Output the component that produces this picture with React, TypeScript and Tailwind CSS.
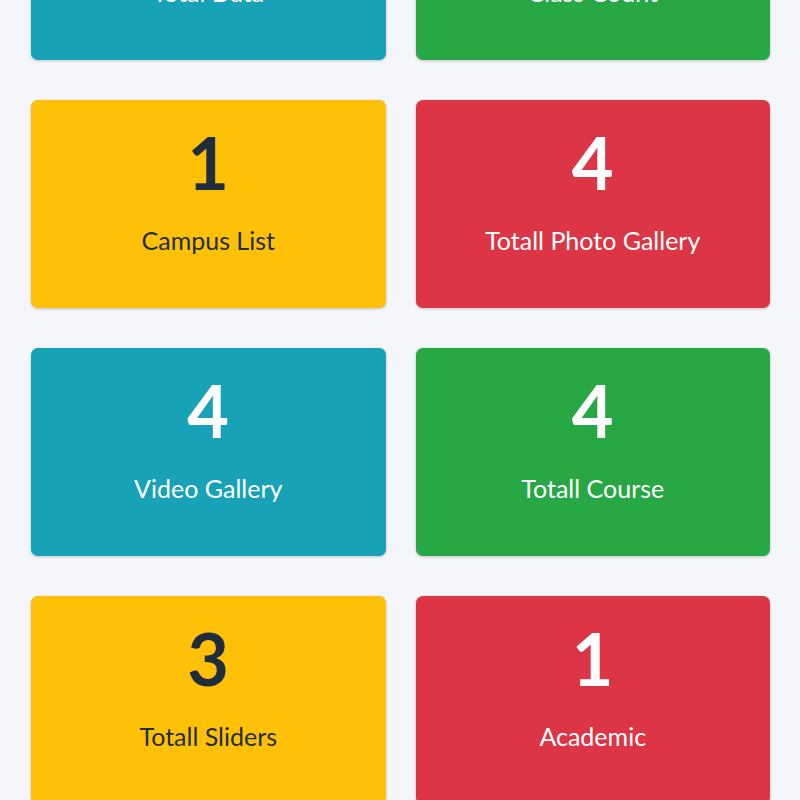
import React from 'react';

type Stat = { count: number; label: string; tone: string };

const stats: Stat[] = [
  { count: 2, label: 'Total Data', tone: 'bg-[#17a2b8] text-white' },
  { count: 6, label: 'Class Count', tone: 'bg-[#28a745] text-white' },
  { count: 1, label: 'Campus List', tone: 'bg-[#ffc107] text-[#1f2d3d]' },
  { count: 4, label: 'Totall Photo Gallery', tone: 'bg-[#dc3545] text-white' },
  { count: 4, label: 'Video Gallery', tone: 'bg-[#17a2b8] text-white' },
  { count: 4, label: 'Totall Course', tone: 'bg-[#28a745] text-white' },
  { count: 3, label: 'Totall Sliders', tone: 'bg-[#ffc107] text-[#1f2d3d]' },
  { count: 1, label: 'Academic', tone: 'bg-[#dc3545] text-white' },
];

const StatCard: React.FC<{ stat: Stat }> = ({ stat }) => (
  <div
    className={`h-[208px] rounded-[7px] flex flex-col items-center pt-[26px] shadow-[0_0_1px_rgba(0,0,0,0.125),0_1px_3px_rgba(0,0,0,0.2)] ${stat.tone}`}
  >
    <div className="text-[72px] leading-none font-bold font-['Lato',sans-serif]">{stat.count}</div>
    <div className="mt-[26px] text-[25px] leading-8 font-['Lato',sans-serif]">{stat.label}</div>
  </div>
);

export default function App() {
  return (
    <div className="bg-[#f4f6f9] overflow-hidden h-[800px]">
      <div className="-mt-[148px] pl-[31px] pr-[30px] grid grid-cols-2 gap-x-[30px] gap-y-[40px]">
        {stats.map((s, i) => (
          <StatCard key={i} stat={s} />
        ))}
      </div>
    </div>
  );
}
